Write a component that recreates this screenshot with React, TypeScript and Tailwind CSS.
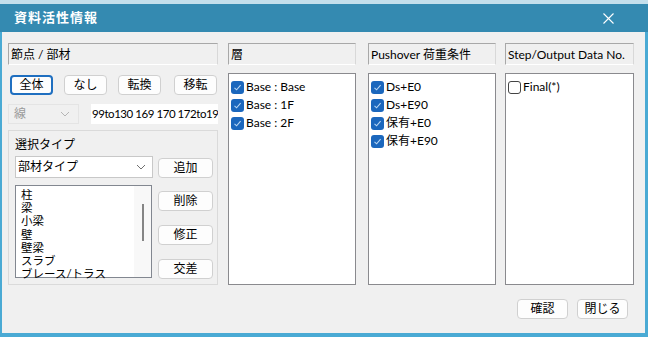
import React from 'react';

const jp = { fontFamily: '"Lato", "Noto Sans CJK JP", sans-serif' };

const Btn: React.FC<{ label: string; focus?: boolean; className?: string }> = ({ label, focus, className }) => (
  <div
    className={`flex items-center justify-center rounded-[4px] bg-[#fdfdfd] text-[12px] text-black ${
      focus ? 'border-2 border-[#1f6fc0]' : 'border border-[#d0d0d0]'
    } ${className ?? ''}`}
  >
    {label}
  </div>
);

const Check: React.FC<{ on?: boolean }> = ({ on }) =>
  on ? (
    <span className="mr-[2px] flex h-[13px] w-[13px] shrink-0 items-center justify-center rounded-[3px] bg-[#1b67bd]">
      <svg width="9" height="9" viewBox="0 0 9 9">
        <path d="M1.5 4.8 L3.6 6.8 L7.6 2.2" fill="none" stroke="#b9d6f2" strokeWidth="1.1" />
      </svg>
    </span>
  ) : (
    <span className="mr-[2px] h-[13px] w-[13px] shrink-0 rounded-[3px] border border-[#444] bg-white" />
  );

const Header: React.FC<{ label: string }> = ({ label }) => (
  <div className="flex h-[22px] items-center border border-[#a8a8a8] border-b-white border-r-[#d8d8d8] pl-[2px] pt-[2px] text-[12px] text-black">
    {label}
  </div>
);

const Column: React.FC<{ title: string; items: { label: string; on: boolean }[]; w: string }> = ({ title, items, w }) => (
  <div className={`flex flex-col ${w}`}>
    <Header label={title} />
    <div className="mt-[8px] h-[212px] border border-[#8a8a8e] bg-white pl-[2px] pt-[4px]">
      {items.map((it) => (
        <div key={it.label} className="flex h-[18px] items-center text-[12px] text-black">
          <Check on={it.on} />
          {it.label}
        </div>
      ))}
    </div>
  </div>
);

const Chevron: React.FC<{ color: string }> = ({ color }) => (
  <svg width="10" height="6" viewBox="0 0 10 6">
    <path d="M1 1 L5 5 L9 1" fill="none" stroke={color} strokeWidth="1" />
  </svg>
);

export default function App() {
  return (
    <div className="flex h-[337px] w-[648px] flex-col bg-[#f0f0f0]" style={jp}>
      <div className="h-[4px] bg-[#c3dfec]" />
      <div className="flex h-[28px] items-center justify-between bg-[#348ab1] pl-[14px] pr-[34px]">
        <span className="text-[13px] font-bold tracking-[1px] text-white">資料活性情報</span>
        <svg width="11" height="11" viewBox="0 0 11 11">
          <path d="M0.5 0.5 L10.5 10.5 M10.5 0.5 L0.5 10.5" stroke="white" strokeWidth="1.1" />
        </svg>
      </div>
      <div className="flex flex-1 flex-col border-b-[4px] border-l-2 border-r-[3px] border-[#4aaad4] pl-[6px] pt-[11px]">
        <div className="flex">
          {/* 節点 / 部材 */}
          <div className="flex w-[210px] flex-col">
            <Header label="節点 / 部材" />
            <div className="mt-[10px] flex h-[20px] gap-[11px] pl-[2px]">
              <Btn label="全体" focus className="w-[43px]" />
              <Btn label="なし" className="w-[43px]" />
              <Btn label="転換" className="w-[43px]" />
              <Btn label="移転" className="ml-[2px] w-[43px]" />
            </div>
            <div className="mt-[9px] flex h-[20px]">
              <div className="flex w-[71px] items-center justify-between border border-[#e4e4e4] bg-[#f0f0f0] pl-[5px] pr-[8px] text-[12px] text-[#9a9a9a]">
                線
                <Chevron color="#b5b5b5" />
              </div>
              <div className="ml-[12px] flex flex-1 items-center overflow-hidden whitespace-nowrap bg-white pl-[1px] text-[11.5px] tracking-[-0.45px] text-black">
                99to130 169 170 172to19
              </div>
            </div>
            <div className="mt-[6px] flex h-[155px] flex-col border border-[#dadada] pl-[6px] pt-[7px]">
              <div className="text-[12px] leading-[14px] text-black">選択タイプ</div>
              <div className="mt-[4px] flex">
                <div className="flex h-[22px] w-[138px] items-center justify-between border border-[#c8c8c8] bg-white pl-[2px] pr-[6px] text-[12px] text-black">
                  部材タイプ
                  <Chevron color="#707070" />
                </div>
                <Btn label="追加" className="ml-[5px] mt-[2px] h-[20px] w-[55px]" />
              </div>
              <div className="mt-[7px] flex">
                <div className="relative h-[93px] w-[137px] border border-[#828790] bg-white pl-[5px] pt-[2px] text-[11.5px] leading-[13.2px] text-black">
                  <div>柱</div>
                  <div>梁</div>
                  <div>小梁</div>
                  <div>壁</div>
                  <div>壁梁</div>
                  <div>スラブ</div>
                  <div>ブレース/トラス</div>
                  <div className="absolute right-0 top-0 h-full w-[17px] bg-[#f8f8f8]">
                    <div className="absolute left-[8px] top-[18px] h-[37px] w-[2px] bg-[#858585]" />
                  </div>
                </div>
                <div className="ml-[6px] flex flex-col gap-[14px] pt-[6px]">
                  <Btn label="削除" className="h-[20px] w-[55px]" />
                  <Btn label="修正" className="h-[20px] w-[55px]" />
                  <Btn label="交差" className="h-[20px] w-[55px]" />
                </div>
              </div>
            </div>
          </div>
          <div className="ml-[10px]">
            <Column
              title="層"
              w="w-[128px]"
              items={[
                { label: 'Base : Base', on: true },
                { label: 'Base : 1F', on: true },
                { label: 'Base : 2F', on: true },
              ]}
            />
          </div>
          <div className="ml-[12px]">
            <Column
              title="Pushover 荷重条件"
              w="w-[128px]"
              items={[
                { label: 'Ds+E0', on: true },
                { label: 'Ds+E90', on: true },
                { label: '保有+E0', on: true },
                { label: '保有+E90', on: true },
              ]}
            />
          </div>
          <div className="ml-[9px]">
            <Column title="Step/Output Data No." w="w-[129px]" items={[{ label: 'Final(*)', on: false }]} />
          </div>
        </div>
        <div className="mt-[14px] flex justify-end gap-[9px] pr-[17px]">
          <Btn label="確認" className="h-[20px] w-[51px]" />
          <Btn label="閉じる" className="h-[20px] w-[51px]" />
        </div>
      </div>
    </div>
  );
}
